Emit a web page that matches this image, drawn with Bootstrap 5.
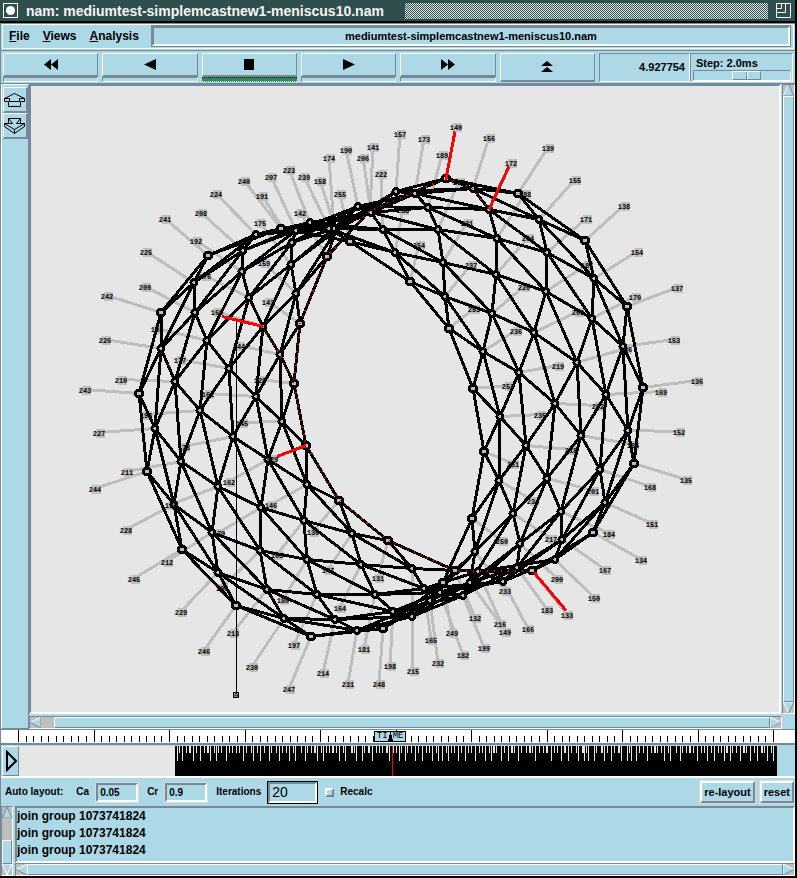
<!DOCTYPE html>
<html lang="en">
<head>
<meta charset="utf-8">
<meta name="viewport" content="width=device-width, initial-scale=1">
<title>nam: mediumtest-simplemcastnew1-meniscus10.nam</title>
<link href="https://cdn.jsdelivr.net/npm/bootstrap@5.3.0/dist/css/bootstrap.min.css" rel="stylesheet">
<style>
:root{--blue:#add8e6;--shade:#778899;--trough:#bebebe;--paper:#e6e6e6}
body{font-family:"Liberation Sans",Arial,sans-serif;font-weight:700;font-size:10px;line-height:14px;color:#000;background:#000}
.app{min-height:100vh;padding:0 2px 2px 0;background:#000}
.titlebar{height:21px;background:#2f4f4f;color:#f5f5f5;font-size:14px;line-height:20px;padding:0 4px 0 3px}
.titlebar button{width:15px;height:15px;background:none;border:0;padding:0;display:flex}
.hatch{height:16px;margin:0 8px 0 21px;background:repeating-conic-gradient(#dfe6e6 0 25%,#2f4f4f 0 50%) 0 0/2px 2px}
.window{background:var(--blue);margin-top:2px;border-left:1px solid var(--shade)}
.up{background:var(--blue);border:1px solid;border-color:#fff var(--shade) var(--shade) #fff}
.down{border:1px solid;border-color:var(--shade) #fff #fff var(--shade)}
.menus{height:27px;border-top:1px solid var(--shade);outline:1px solid #fff;outline-offset:-2px;padding:2px 5px 4px 8px}
.menus button{background:none;border:0;padding:0;margin-right:13px;font-weight:700;font-size:12px;color:#000}
.filename{font-size:11px;line-height:16px;border:2px solid;border-color:var(--shade) #fff #fff var(--shade);outline:1px solid var(--shade)}
.tools{height:34px;border-top:1px solid var(--shade);border-bottom:1px solid var(--shade);padding:2px 2px 1px}
.tools button{min-height:0;padding:0 0 1px;color:#000;border-bottom-width:2px}
.tools button svg{display:block;margin:auto}
.strip{height:5px}
.live{background:#2e8b57;border-top:1px dotted #000;border-bottom:1px dotted #fff}
.clock{width:91px;font-size:11px;line-height:26px;padding-right:4px}
.stepper{width:103px;padding:2px 1px 1px 2px}
.stepper label{padding-left:3px;line-height:14px;font-size:11px}
input[type=range]{appearance:none;display:block;width:100%;height:11px;margin:0;background:var(--blue);border:1px solid;border-color:var(--shade) #fff #fff var(--shade)}
input[type=range]::-webkit-slider-thumb{appearance:none;width:29px;height:9px;background:linear-gradient(90deg,transparent 13px,#778899 13px 14px,#fff 14px 15px,transparent 15px),var(--blue);border:1px solid;border-color:#fff var(--shade) var(--shade) #fff}
.side{width:28px;padding:2px 1px 0 1px;border-right:1px solid var(--shade)}
.side button{width:25px;height:26px;padding:0;border-width:1px 2px 2px 1px}
.side svg{display:block;margin:auto}
.stage{min-height:500px;border:2px solid;border-color:var(--shade) #fff #fff var(--shade);background:var(--paper);min-width:0;margin-right:1px}
.stage svg{display:block;width:100%;height:100%}
.vbar{width:13px;background:var(--trough);border:1px solid;border-color:var(--shade) #fff #fff var(--shade)}
.hbar{height:13px;background:var(--trough);border:1px solid;border-color:var(--shade) #fff #fff var(--shade)}
.lower{margin-top:2px}
.arrow{border:0;padding:0;width:11px;height:11px;background:none;display:flex;flex:none}
.gap{flex:0 0 13px}
.logbar{width:12px}
.ruler{height:15px;background:#fff;border-top:1px solid var(--shade);border-bottom:1px solid var(--shade)}
.ruler svg.scale,.events svg.bars{display:block;width:100%;height:100%}
.timetag{position:absolute;left:47%;top:1px;width:32px;height:11px;padding:0;border:1px solid #000;background:var(--blue);font:9px/9px "Liberation Mono",monospace;color:#000;display:flex;justify-content:center;align-items:center}
.timetag svg{flex:none}
.events{height:34px;border-top:1px solid var(--shade);border-bottom:2px solid #fff;padding:1px 2px 0 1px}
.events button{width:17px;padding:0;flex:none}
.controls{height:28px;padding:0 1px 0 4px}
.controls label{margin:0 7px 0 9px}
.controls label.first{margin-left:13px}
.controls label.last{margin:0}
.controls input[type=text]{height:19px;width:42px;padding:0 2px;font-weight:700;font-size:10px;color:#000;background:var(--blue);border:2px solid;border-color:var(--shade) #fff #fff var(--shade);outline:1px solid #d9d9d9}
.controls input[type=text].focused{width:49px;height:21px;font-size:14px;font-weight:400;outline-color:#000}
.controls input[type=checkbox]{appearance:none;width:9px;height:9px;margin:0 6px 0 8px;background:var(--blue);border:2px solid;border-color:#fff var(--shade) var(--shade) #fff}
.controls button{height:22px;padding:0 2px;font-size:11px;font-weight:700;color:#000;border-width:2px;box-shadow:0 0 0 1px #d9d9d9;margin-left:5px}
.logpane{margin-left:2px}
.log{height:57px;border:2px solid;border-color:var(--shade) #fff #fff var(--shade);font-size:12px;line-height:17px;overflow:hidden}
.leaf{font:700 7px "Liberation Mono",monospace;text-anchor:middle}
</style>
<script src="https://cdn.jsdelivr.net/npm/bootstrap@5.3.0/dist/js/bootstrap.bundle.min.js"></script>
</head>
<body>
<div class="app d-flex flex-column">
  <header class="titlebar d-flex align-items-center">
    <button aria-label="Window menu"><svg width="15" height="15"><rect x=".5" y=".5" width="14" height="14" fill="none" stroke="#fff"/><circle cx="7.5" cy="7.5" r="4.5" fill="#fff"/></svg></button>
    <span class="ms-2 text-nowrap">nam: mediumtest-simplemcastnew1-meniscus10.nam</span>
    <div class="hatch flex-fill"></div>
    <button aria-label="Resize"><svg width="15" height="15" fill="none" stroke="#fff"><path d="M.5.5h14v14H.5zM.5 9.500h9v-9M.5 5.500h5v-5"/></svg></button>
  </header>
  <div class="window d-flex flex-column flex-fill">
    <nav class="menus d-flex align-items-center">
      <button><u>F</u>ile</button><button><u>V</u>iews</button><button><u>A</u>nalysis</button>
      <div class="filename flex-fill text-center">mediumtest-simplemcastnew1-meniscus10.nam</div>
    </nav>
    <div class="tools d-flex">
      <div class="d-flex flex-fill" id="transport"></div>
      <div class="clock down text-end">4.927754</div>
      <div class="stepper down"><label for="step" class="d-block">Step: 2.0ms</label><input type="range" id="step" min="0" max="100" value="56"></div>
    </div>
    <main class="d-flex flex-fill">
      <aside class="side up d-flex flex-column">
        <button class="up" aria-label="Zoom in"><svg width="22" height="16" fill="none" stroke="#000"><path d="M10.500 1.500 20.500 6.500v3h-4v5h-12v-5H.5v-3zM.5 6.500h5v3M20.500 6.500h-5v3M5.500 9.500h10"/></svg></button>
        <button class="up" aria-label="Zoom out"><svg width="22" height="16" fill="none" stroke="#000"><path d="M4.500.5h12v5h4v3l-10 7-10-7v-3h4zM.5 5.500l10 6 10-6M10.500 11.500v4M4.500.5l4 5h-4M16.500.5l-4 5h4"/></svg></button>
      </aside>
      <div class="d-flex flex-column flex-fill">
        <div class="d-flex flex-fill">
          <section class="stage flex-fill"><svg id="net" viewBox="31 86 748 625" role="img" aria-label="Network topology"></svg></section>
          <div class="vbar d-flex flex-column">
            <button class="arrow" aria-label="Scroll up"><svg width="11" height="11"><path d="M5.500 0 11 11H0z" fill="#add8e6"/><path d="M0 11 5.500 0" stroke="#fff"/><path d="M5.500 0 11 11H0" fill="none" stroke="#778899"/></svg></button>
            <div class="up flex-fill"></div>
            <button class="arrow" aria-label="Scroll down"><svg width="11" height="11"><path d="M0 0h11L5.500 11z" fill="#add8e6"/><path d="M11 0H0l5.500 11" fill="none" stroke="#fff"/><path d="M11 0 5.500 11" stroke="#778899"/></svg></button>
          </div>
        </div>
        <div class="lower d-flex">
          <div class="hbar d-flex flex-fill">
            <button class="arrow" aria-label="Scroll left"><svg width="11" height="11"><path d="M0 5.500 11 0v11z" fill="#add8e6"/><path d="M11 0 0 5.500" stroke="#fff"/><path d="M0 5.500 11 11V0" fill="none" stroke="#778899"/></svg></button>
            <div class="gap"></div><div class="up flex-fill"></div>
            <button class="arrow" aria-label="Scroll right"><svg width="11" height="11"><path d="M0 0v11l11-5.500z" fill="#add8e6"/><path d="M0 11V0l11 5.500" fill="none" stroke="#fff"/><path d="M11 5.500 0 11" stroke="#778899" stroke-dasharray="2 1"/></svg></button>
          </div>
          <div class="gap"></div>
        </div>
      </div>
    </main>
    <div class="ruler position-relative"><svg id="scale" class="scale" viewBox="1 0 794 13" preserveAspectRatio="none"></svg>
      <button class="timetag" aria-label="Time">TI<svg width="5" height="9"><path d="M2.500 0v9M1.500 3v6M3.500 3v6M.5 7v2M4.500 7v2" stroke="#000"/></svg>ME</button></div>
    <div class="events d-flex">
      <button class="up" aria-label="Play"><svg width="12" height="22" viewBox="0 0 12 22"><path d="M2 2v18L11 11z" fill="#add8e6" stroke="#000" stroke-width="2"/></svg></button>
      <svg id="events" class="bars" viewBox="19 0 774 30" preserveAspectRatio="none"></svg>
    </div>
    <div class="controls d-flex align-items-center">
      <span>Auto layout:</span>
      <label for="ca" class="first">Ca</label><input type="text" id="ca" value="0.05">
      <label for="cr">Cr</label><input type="text" id="cr" value="0.9">
      <label for="it">Iterations</label><input type="text" id="it" class="focused" value="20">
      <input type="checkbox" id="rc"><label for="rc" class="last">Recalc</label>
      <button class="up ms-auto">re-layout</button><button class="up">reset</button>
    </div>
    <footer class="d-flex">
      <div class="vbar logbar d-flex flex-column">
        <button class="arrow" aria-label="Log up"><svg width="10" height="11"><path d="M5 0 10 11H0z" fill="#add8e6" stroke="#778899"/></svg></button>
        <div class="flex-fill"></div><div class="up flex-fill"></div>
        <button class="arrow" aria-label="Log down"><svg width="10" height="11"><path d="M0 0h10L5 11z" fill="#add8e6" stroke="#fff"/></svg></button>
      </div>
      <div class="logpane flex-fill">
        <div class="log"><div>join group 1073741824</div><div>join group 1073741824</div><div>join group 1073741824</div></div>
        <div class="hbar d-flex">
          <button class="arrow" aria-label="Log left"><svg width="11" height="11"><path d="M0 5.500 11 0v11z" fill="#add8e6"/><path d="M11 0 0 5.500" stroke="#fff"/><path d="M0 5.500 11 11" stroke="#778899"/></svg></button>
          <div class="up flex-fill"></div>
          <button class="arrow" aria-label="Log right"><svg width="11" height="11"><path d="M0 0v11l11-5.500z" fill="#add8e6"/><path d="M0 11V0l11 5.500" fill="none" stroke="#fff"/><path d="M11 5.500 0 11" stroke="#778899"/></svg></button>
        </div>
      </div>
    </footer>
  </div>
</div>
<script>
// Transport buttons
const icons=[['Fast rewind','M8 0v11L1 5.500zM15 0v11L8 5.500z'],['Rewind','M14 0v11L2 5.500z'],['Stop','M3 0h10v11H3z'],['Play','M2 0v11l12-5.500z'],['Fast forward','M1 0v11l7-5.500zM8 0v11l7-5.500z'],['Close','M8 0l6 5H2zM8 6l6 5H2z']];
document.getElementById('transport').innerHTML=icons.map(([n,d],i)=>`<div class="d-flex flex-column me-1" style="width:${100/6}%"><button class="up flex-fill" aria-label="${n}"><svg width="16" height="11"><path d="${d}"/></svg></button>${i<5?`<div class="strip ${i==2?'live':'down'}"></div>`:''}</div>`).join('');

// Core nodes, eight rings of sixteen
const core=[
294,383,306,445,339,500,388,540,455,570,532,570,593,532,634,463,643,387,627,306,585,240,518,193,446,178,370,210,327,256,300,323,
280,354,282,421,307,484,352,533,412,568,478,571,555,559,605,502,628,430,623,346,594,278,539,219,473,188,396,191,336,230,296,293,
263,326,256,396,268,459,304,520,361,564,424,588,503,581,562,539,600,469,606,394,592,318,547,252,489,209,415,193,334,228,291,264,
249,297,229,368,233,436,261,507,307,559,375,594,440,592,517,567,561,511,581,435,577,362,546,291,497,238,428,207,358,206,292,242,
242,271,207,340,200,410,218,486,260,550,317,594,393,611,463,595,520,543,547,478,555,403,534,332,496,274,438,229,371,212,296,230,
243,250,195,312,175,381,181,461,212,532,267,589,335,619,412,616,470,582,513,513,526,445,519,372,492,313,443,262,383,229,310,222,
256,234,194,282,161,348,155,428,174,504,218,572,284,618,357,630,430,600,475,551,499,480,500,416,483,351,445,296,395,252,329,228,
281,228,208,255,161,312,139,393,147,471,182,549,236,605,311,636,383,628,443,582,472,518,484,451,473,388,449,328,410,281,350,241];
// Leaves 128..255, one per core node
const leaf=[
260,379,272,458,313,531,378,577,475,617,567,614,641,559,686,479,697,380,677,287,624,205,548,147,456,126,373,146,300,212,268,301,
239,345,242,422,271,504,328,569,413,612,505,631,594,597,652,523,679,431,674,339,637,251,575,179,489,137,400,133,320,180,264,262,
217,311,208,393,229,481,277,554,340,607,431,639,528,628,605,569,650,486,661,391,635,296,586,218,511,162,424,138,329,157,260,222,
205,275,180,359,184,446,219,532,283,599,364,648,463,654,547,609,609,533,633,444,626,348,587,264,525,193,442,154,346,149,262,195,
196,240,157,328,146,414,171,504,222,587,294,644,390,665,484,647,557,578,593,490,598,405,578,311,528,237,459,181,363,157,271,176,
201,212,145,286,121,379,127,471,167,561,233,632,323,672,413,670,500,623,551,538,571,449,558,365,524,286,467,222,404,209,289,169,
216,193,146,251,105,339,99,432,126,529,181,611,252,666,348,683,438,662,505,590,533,500,540,414,516,330,471,264,381,173,304,176,
244,180,165,218,107,295,85,389,95,488,134,578,204,650,289,688,379,683,452,632,502,540,513,463,508,385,474,308,419,244,340,193];
// 222 and 238 hang over each other's side of the rim
[leaf[188],leaf[220]]=[381,403];[leaf[189],leaf[221]]=[173,209];
const N=i=>[core[2*i],core[2*i+1]],L=i=>[leaf[2*i],leaf[2*i+1]];
let spokes='',links='',dots='',boxes='',names='';
const seg=(a,b)=>`M${a}L${b}`;
for(let i=0;i<128;i++){
  const r=i>>4,c=i&15,p=N(i),q=L(i);
  spokes+=seg(p,q);
  links+=seg(p,N(r*16+(c+1)%16));
  if(r<7){links+=seg(p,N(i+16));links+=seg(p,N((r+1)*16+(c+1)%16));}
  const s=r==0||r==7?3.500:3;
  dots+=`<circle cx="${p[0]}" cy="${p[1]}" r="${s}"/>`;
  boxes+=`M${q[0]-3} ${q[1]-4}h9v9h-9z`;
  names+=`<text class="leaf" x="${q[0]}" y="${q[1]+3}">${i+128}</text>`;
}
const path=a=>'M'+a.map(N).join('L');
const flow=path([12,13,14,15,0,1,2,3,4,5])+path([32,16,0])+path([12,28,44]);
const red=seg([455,131],N(12))+seg([509,166],N(44))+seg([222,316],N(32))+seg([277,456],N(1))+seg([566,610],[534,572]);
document.getElementById('net').innerHTML=`<g fill="none" shape-rendering="crispEdges"><path d="${spokes}" stroke="#bebebe" stroke-width="3"/><path d="${boxes}" fill="#bebebe"/><path d="${links}" stroke="#000" stroke-width="3"/><path d="M236.500 318V691" stroke="#000"/><rect x="233.500" y="691.500" width="5" height="5" stroke="#000"/></g><g fill="#bebebe" stroke="#000" stroke-width="3" shape-rendering="crispEdges">${dots}</g><g fill="none" stroke="red" shape-rendering="crispEdges"><path d="${flow}" stroke-width="2" stroke-dasharray="1 6"/><path d="${red}" stroke-width="3"/></g>${names}<text class="leaf" x="236" y="697">0</text>`;

// Ruler ticks
let t='';for(let i=0;i<=100;i++){const x=Math.round(18+i*7.550)+.5;t+=`M${x} ${i%10?6:0}V12`;}
document.getElementById('scale').innerHTML=`<path d="${t}" stroke="#000"/>`;

// Event density strip
const longA=[532,548,580,601,631,649,679,730,760,780,808,838,868,886,916,952,970,1018,1036,1068,1087,1117,1168].map(v=>v/3);
const longB=[7,25,55,76,106,124,136,154,184,205,235,265,283,313,334,364,415,463,493,514,544,562,574,592,622,643,673,691,703,718,751,802,820,850,901,931,952,982,1000,1030,1060,1081,1111,1129].map(v=>397+v/3);
const longs=longA.concat(longB).map(Math.floor);let e='';
longs.forEach(x=>e+=`M${x} 0h1v15h-1z`);
for(let x=179,k=0;x<776;k++){const w=k%5==3?2:1;if(!longs.some(l=>Math.abs(l-x)<2))e+=`M${x} 0h${w}v7h-${w}z`;x+=[3,4,3,4,3,5,3][k%7];}
document.getElementById('events').innerHTML=`<g shape-rendering="crispEdges"><path d="M19 0H175V30H19z" fill="#e6e6e6"/><path d="M175 0H777V30H175z"/><path d="${e}" fill="#e6e6e6"/><path d="M392.500 0V30" stroke="red"/></g>`;
</script>
</body>
</html>
